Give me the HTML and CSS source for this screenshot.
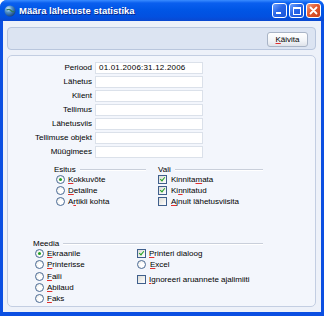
FILE: index.html
```html
<!DOCTYPE html>
<html lang="et">
<head>
  <meta charset="UTF-8" />
  <title>Määra lähetuste statistika</title>
  <link rel="stylesheet" href="styles.css">
</head>
<body>
  <div class="window">
    <!-- Title bar -->
    <div class="titlebar">
      <svg class="app-icon" width="12" height="12" viewBox="0 0 12 12">
        <defs>
          <radialGradient id="globe" cx="0.35" cy="0.3" r="0.75">
            <stop offset="0" stop-color="#d6ecff"/>
            <stop offset="0.45" stop-color="#4d8fc8"/>
            <stop offset="1" stop-color="#173f78"/>
          </radialGradient>
        </defs>
        <circle cx="6" cy="6" r="5.5" fill="url(#globe)"/>
        <path d="M2.5 5 Q5 3.5 7 5.5 T10 6" stroke="#2f7a5a" stroke-width="1.2" fill="none"/>
      </svg>
      <span class="title">Määra lähetuste statistika</span>
      <div class="caption-buttons">
        <span class="cap-btn min"><span class="min-bar"></span></span>
        <span class="cap-btn max"><span class="max-box"></span></span>
        <span class="cap-btn close">
          <svg width="13" height="13" viewBox="0 0 13 13">
            <path d="M3.5 3.5 L9.5 9.5 M9.5 3.5 L3.5 9.5" stroke="#fff" stroke-width="1.8" stroke-linecap="round"/>
          </svg>
        </span>
      </div>
    </div>

    <div class="client">
      <!-- Toolbar -->
      <div class="toolbar">
        <button class="btn"><span class="acc">K</span>äivita</button>
      </div>

      <!-- Main panel -->
      <div class="panel">
        <div class="fields">
          <label>Periood</label><div class="input">01.01.2006:31.12.2006</div>
          <label>Lähetus</label><div class="input"></div>
          <label>Klient</label><div class="input"></div>
          <label>Tellimus</label><div class="input"></div>
          <label>Lähetusviis</label><div class="input"></div>
          <label>Tellimuse objekt</label><div class="input"></div>
          <label>Müügimees</label><div class="input"></div>
        </div>

        <div class="groups">
          <div class="group esitus">
            <div class="group-head">Esitus</div>
            <div class="opt"><span class="radio checked"></span><span><span class="acc">K</span>okkuvõte</span></div>
            <div class="opt"><span class="radio"></span><span><span class="acc">D</span>etailne</span></div>
            <div class="opt"><span class="radio"></span><span>A<span class="acc">r</span>tikli kohta</span></div>
          </div>
          <div class="group vali">
            <div class="group-head">Vali</div>
            <div class="opt"><span class="check checked"></span><span>Kinnita<span class="acc">m</span>ata</span></div>
            <div class="opt"><span class="check checked"></span><span>Ki<span class="acc">n</span>nitatud</span></div>
            <div class="opt"><span class="check"></span><span><span class="acc">A</span>jnult lähetusviisita</span></div>
          </div>
        </div>

        <div class="group meedia">
          <div class="group-head">Meedia</div>
          <div class="meedia-cols">
            <div class="col-left">
              <div class="opt"><span class="radio checked"></span><span><span class="acc">E</span>kraanile</span></div>
              <div class="opt"><span class="radio"></span><span><span class="acc">P</span>rinterisse</span></div>
              <div class="opt"><span class="radio"></span><span><span class="acc">F</span>aili</span></div>
              <div class="opt"><span class="radio"></span><span><span class="acc">A</span>bilaud</span></div>
              <div class="opt"><span class="radio"></span><span><span class="acc">F</span>aks</span></div>
            </div>
            <div class="col-right">
              <div class="opt"><span class="check checked"></span><span><span class="acc">P</span>rinteri dialoog</span></div>
              <div class="opt"><span class="radio"></span><span><span class="acc">E</span>xcel</span></div>
              <div class="opt spaced"><span class="check"></span><span><span class="acc">I</span>gnoreeri aruannete ajalimiiti</span></div>
            </div>
          </div>
        </div>
      </div>
    </div>
  </div>
</body>
</html>
```

FILE: styles.css
```css
body {
  margin: 0;
  font-family: 'Liberation Sans', Arial, sans-serif;
  font-size: 8px;
  color: #000;
  background: #fff;
}

.window {
  width: 324px;
  height: 316px;
  display: flex;
  flex-direction: column;
  background: #0b4fe2;
  border-radius: 7px 7px 0 0;
  overflow: hidden;
}

/* Title bar */
.titlebar {
  height: 21px;
  flex: none;
  display: flex;
  align-items: center;
  padding: 0 3px 0 4px;
  background: linear-gradient(#3a8cff 0, #0a5fef 3px, #0056e6 45%, #0250e0 80%, #0a48d0 100%);
}

.app-icon {
  flex: none;
  margin-right: 3px;
}

.title {
  flex: 1;
  color: #fff;
  font-weight: bold;
  font-size: 9.5px;
  text-shadow: 1px 1px 0 #0a2a8a;
}

.caption-buttons {
  display: flex;
  gap: 2px;
}

.cap-btn {
  width: 13px;
  height: 13px;
  border: 1px solid #fff;
  border-radius: 3px;
  display: flex;
  align-items: center;
  justify-content: center;
  position: relative;
  background: linear-gradient(135deg, #6fa3ff 0%, #2866e8 45%, #1a55d8 100%);
}

.cap-btn.close {
  background: linear-gradient(135deg, #f0a184 0%, #e2582f 45%, #c8401a 100%);
}

.min-bar {
  position: absolute;
  left: 3px;
  bottom: 3px;
  width: 5px;
  height: 2px;
  background: #fff;
}

.max-box {
  width: 6px;
  height: 5px;
  border: 1px solid #fff;
  border-top-width: 2px;
}

/* Client area */
.client {
  flex: 1;
  margin: 0 3px 4px 3px;
  padding: 6px 5px 5px 4px;
  background: #edf1f9;
  display: flex;
  flex-direction: column;
  gap: 5px;
}

.toolbar {
  height: 21px;
  flex: none;
  border: 1px solid #b9c6dd;
  border-radius: 4px;
  background: #dce4f2;
  display: flex;
  justify-content: flex-end;
  align-items: flex-start;
  padding-right: 7px;
}

.btn {
  margin-top: 4px;
  width: 41px;
  height: 15px;
  padding: 0;
  font-family: inherit;
  font-size: 8px;
  color: #000;
  border: 1px solid #a9b4c6;
  border-radius: 3px;
  background: linear-gradient(#ffffff, #f2f4f8 60%, #dfe3ea);
}

.acc {
  text-decoration: underline;
  text-decoration-color: #e03030;
}

.panel {
  flex: 1;
  border: 1px solid #c3cee2;
  border-radius: 5px;
  background: #f3f6fc;
}

/* Fields */
.fields {
  display: grid;
  grid-template-columns: 84px 108px;
  grid-auto-rows: 12px;
  column-gap: 3px;
  row-gap: 2px;
  padding-top: 6px;
}

.fields label {
  text-align: right;
  line-height: 12px;
  white-space: nowrap;
}

.input {
  background: #fff;
  border: 1px solid #dbe1ea;
  line-height: 10px;
  padding-left: 3px;
  font-size: 8px;
  letter-spacing: 0.2px;
}

/* Option groups */
.groups {
  display: flex;
  gap: 12px;
  margin-top: 6px;
  padding-left: 46px;
}

.esitus {
  width: 92px;
}

.vali {
  width: 105px;
}

.meedia {
  width: 230px;
  margin: 31px 0 0 25px;
}

.group-head {
  height: 10px;
  display: flex;
  align-items: center;
}

.group-head::after {
  content: "";
  flex: 1;
  height: 0;
  margin: 2px 0 0 4px;
  border-top: 1px solid #c9cfda;
  border-bottom: 1px solid #fff;
}

.opt {
  height: 11px;
  display: flex;
  align-items: center;
  white-space: nowrap;
}

.radio {
  flex: none;
  width: 7px;
  height: 7px;
  margin: 0 3px 0 2px;
  border: 1px solid #4b6b96;
  border-radius: 50%;
  background: radial-gradient(circle at 60% 60%, #fff 30%, #e2e2dc 100%);
  display: flex;
  align-items: center;
  justify-content: center;
}

.radio.checked::after {
  content: "";
  width: 3px;
  height: 3px;
  border-radius: 50%;
  background: #22a122;
}

.check {
  flex: none;
  width: 7px;
  height: 7px;
  margin-right: 3px;
  border: 1px solid #3f5f8c;
  background: linear-gradient(135deg, #dcdcd6, #fff);
  position: relative;
}

.check.checked::after {
  content: "";
  position: absolute;
  left: 2px;
  top: 0;
  width: 2px;
  height: 4px;
  border: solid #22a122;
  border-width: 0 1.5px 1.5px 0;
  transform: rotate(40deg);
}

.vali .check {
  margin-right: 4px;
}

.meedia .radio {
  margin-right: 3px;
}

.meedia-cols {
  display: flex;
}

.meedia .opt {
  height: 11.25px;
}

.col-left {
  width: 104px;
}

.col-right .radio {
  margin-left: 0;
  margin-right: 4px;
}

.col-right .opt.spaced {
  margin-top: 3px;
}
```
